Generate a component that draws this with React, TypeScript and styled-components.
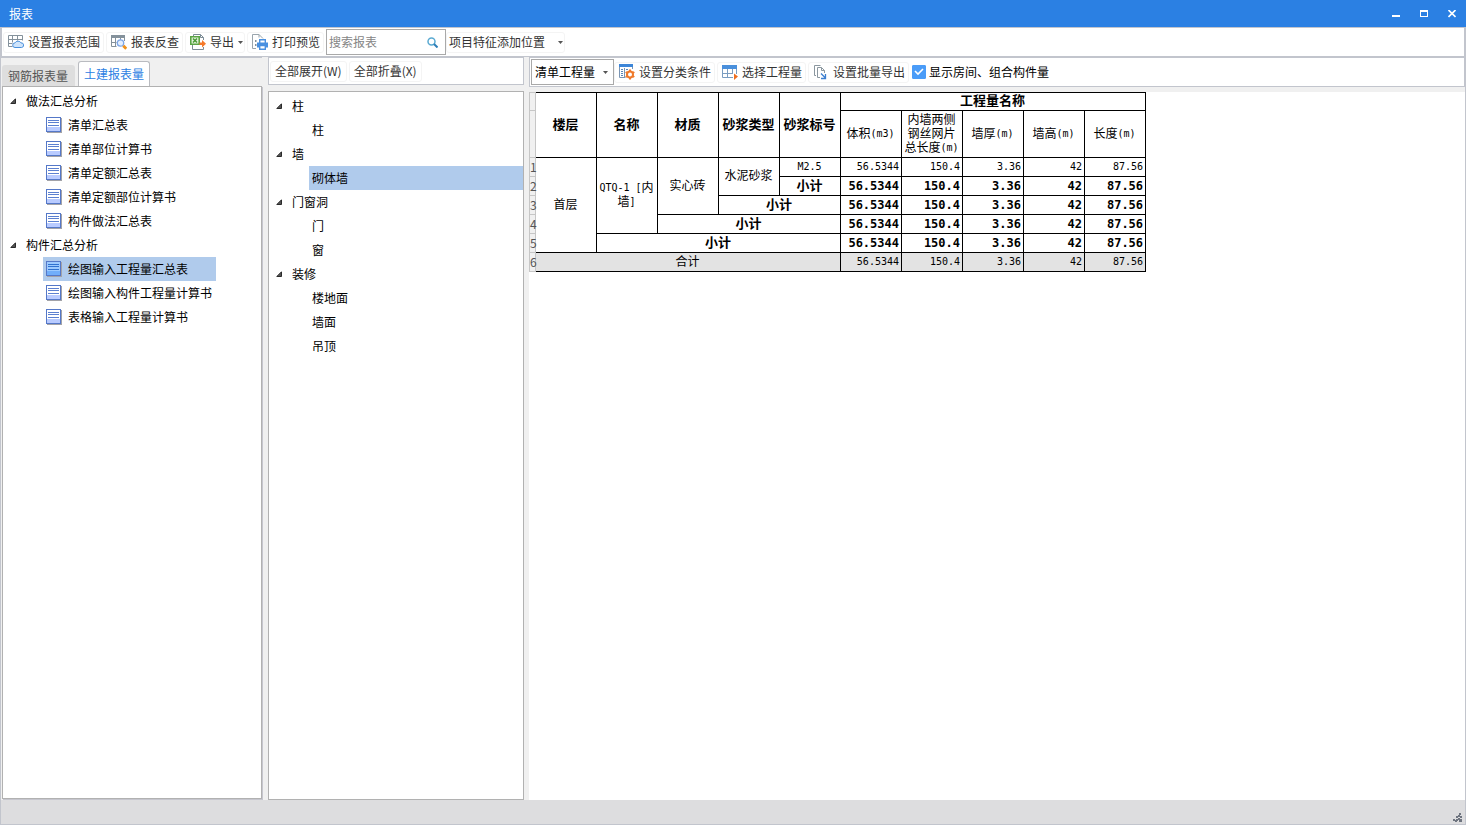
import React, { useState } from "react";
import styled, { createGlobalStyle, css } from "styled-components";

const UI_FONT = `"Noto Sans CJK SC", "Noto Sans", sans-serif`;
const BORDER = "#c2c5cd";
const PANEL_BORDER = "#b1b1b1";
const BLUE = "#2b80e3";
const SELECTED = "#b0cbec";

const GlobalStyle = createGlobalStyle`
  *, *::before, *::after { box-sizing: border-box; }
  body {
    margin: 0;
    background: #f0f0f0;
    color: #000;
    font: 12px/18px ${UI_FONT};
  }
  button, input, select { font: inherit; color: inherit; }
  ul { list-style: none; margin: 0; padding: 0; }
  svg { display: block; flex: none; }
`;

const Window = styled.div`
  display: flex;
  flex-direction: column;
  min-height: 100vh;
`;

const TitleBar = styled.header`
  display: flex;
  align-items: center;
  justify-content: space-between;
  height: 27px;
  padding: 0 5px 0 9px;
  background: ${BLUE};
  color: #fff;
`;

const Title = styled.h1`
  margin: 0;
  font-size: 12px;
  font-weight: 400;
`;

const WindowButtons = styled.div`
  display: flex;
  gap: 10px;
`;

const WindowButton = styled.button`
  display: grid;
  place-items: center;
  width: 18px;
  height: 18px;
  padding: 0;
  border: 0;
  background: none;
`;

const Frame = styled.div`
  flex: 1;
  display: flex;
  flex-direction: column;
  border: 1px solid ${BORDER};
`;

const Toolbar = styled.div`
  display: flex;
  align-items: center;
  background: #fff;
  white-space: nowrap;
`;

const MainToolbar = styled(Toolbar)`
  height: 29px;
  padding-left: 1px;
  border: 1px solid ${BORDER};
  border-width: 0 1px 1px;
`;

const ToolButton = styled.button<{ $menu?: boolean; $plain?: boolean }>`
  display: flex;
  align-items: center;
  gap: 4px;
  height: 21px;
  margin-right: 2px;
  padding: 0 ${(p) => (p.$menu ? 1 : 3)}px 0 4px;
  border: 1px solid #f4f4f4;
  border-radius: 3px;
  background: #fff;
  color: #333;
  ${(p) =>
    p.$plain &&
    css`
      padding-left: 2px;
      gap: 13px;
    `}
`;

const SearchBox = styled.label`
  display: flex;
  align-items: center;
  width: 120px;
  height: 26px;
  padding: 0 7px 0 2px;
  border: 1px solid #a9a9a9;
  background: #fff;
`;

const SearchInput = styled.input`
  flex: 1;
  min-width: 0;
  padding: 0;
  border: 0;
  outline: 0;
  background: none;
  &::placeholder { color: #858585; opacity: 1; }
`;

const Body = styled.main`
  flex: 1;
  display: flex;
`;

const LeftColumn = styled.section`
  display: flex;
  flex-direction: column;
  flex: 0 0 261px;
  padding: 3px 0 1px 1px;
  border-top: 1px solid ${BORDER};
`;

const Tabs = styled.div`
  display: flex;
  align-items: flex-end;
  gap: 3px;
`;

const Tab = styled.button<{ $active: boolean }>`
  height: 21px;
  padding: 0 7px 0 6px;
  border: 0 solid #b9bbc0;
  border-radius: 3px 3px 0 0;
  background: #dedede;
  color: #555;
  line-height: 18px;
  ${(p) =>
    p.$active &&
    css`
      height: 25px;
      padding: 0 5px;
      border-width: 1px 1px 0;
      background: #fff;
      color: ${BLUE};
    `}
`;

const TreePanel = styled.div<{ $raised?: boolean }>`
  flex: 1;
  padding: 2px 0;
  border: 1px solid ${PANEL_BORDER};
  background: #fff;
  ${(p) => p.$raised && css`box-shadow: 1px 1px 0 #c6c6ce;`}
`;

const MiddleColumn = styled.section`
  display: flex;
  flex-direction: column;
  flex: 0 0 256px;
  gap: 6px;
  margin-left: 6px;
`;

const MiddleToolbar = styled(Toolbar)`
  height: 28px;
  padding-left: 1px;
  border: 1px solid ${BORDER};
`;

const TextButton = styled(ToolButton)`
  padding-right: 4px;
`;

const RightColumn = styled.section`
  display: flex;
  flex-direction: column;
  flex: 1;
  min-width: 0;
  margin-left: 5px;
  gap: 5px;
`;

const RightToolbar = styled(Toolbar)`
  height: 30px;
  padding-left: 1px;
  border: 1px solid ${BORDER};
`;

const SelectBox = styled.div`
  display: grid;
  align-items: center;
  width: 83px;
  height: 26px;
  border: 1px solid #a9a9a9;
  & > * { grid-area: 1 / 1; }
  & > svg { justify-self: end; margin-right: 5px; pointer-events: none; }
`;

const Select = styled.select`
  appearance: none;
  width: 100%;
  height: 24px;
  padding: 0 3px;
  border: 0;
  background: none;
`;

const CheckLabel = styled.label`
  display: flex;
  align-items: center;
  gap: 3px;
  margin-left: 1px;
`;

const Check = styled.span`
  display: grid;
  width: 14px;
  height: 14px;
  & > * { grid-area: 1 / 1; pointer-events: none; }
  & > input {
    appearance: none;
    width: 14px;
    height: 14px;
    margin: 0;
    border: 1px solid #4a9cf8;
    border-radius: 1px;
    pointer-events: auto;
  }
  & > input:checked { background: #4a9cf8; }
`;

const Branch = styled.button<{ $indent: number }>`
  display: flex;
  align-items: center;
  gap: 10px;
  width: 100%;
  height: 24px;
  padding: 0 0 0 ${(p) => p.$indent}px;
  border: 0;
  background: none;
`;

const Leaves = styled.ul<{ $indent: number; $fit?: boolean }>`
  margin-left: ${(p) => p.$indent}px;
  ${(p) => p.$fit && css`width: fit-content;`}
`;

const Leaf = styled.button<{ $selected: boolean }>`
  display: flex;
  align-items: center;
  gap: 6px;
  width: 100%;
  height: 24px;
  padding: 0 4px 0 3px;
  border: 0;
  background: ${(p) => (p.$selected ? SELECTED : "transparent")};
  white-space: nowrap;
`;

const Sheet = styled.div`
  flex: 1;
  background: #fff;
`;

const ReportTable = styled.table`
  width: 617px;
  table-layout: fixed;
  border-collapse: separate;
  border-spacing: 0;
  line-height: 14px;
`;

const IndexCol = styled.col`width: 7px;`;
const DataCol = styled.col`width: 61px;`;

const Row = styled.tr<{ $height: number; $total?: boolean }>`
  height: ${(p) => p.$height}px;
  background: ${(p) => (p.$total ? "#e3e3e3" : "#fff")};
`;

const IndexCell = styled.th<{ $first?: boolean }>`
  padding: 0;
  border: 1px solid #c6c6c6;
  border-top-width: ${(p) => (p.$first ? 1 : 0)}px;
  background: #f0f0f0;
  color: #555;
  font-weight: 400;
  text-align: left;
`;

const cell = css<{ $first?: boolean; $bold?: boolean; $number?: boolean }>`
  padding: 0 ${(p) => (p.$number ? 2 : 1)}px 3px 0;
  border: 0 solid #000;
  border-width: ${(p) => (p.$first ? 1 : 0)}px 1px 1px 0;
  font-size: ${(p) => (p.$bold ? 13 : 12)}px;
  font-weight: ${(p) => (p.$bold ? 700 : 400)};
  text-align: ${(p) => (p.$number ? "right" : "center")};
  white-space: pre-line;
`;

const HeadCell = styled.th`${cell}`;
const DataCell = styled.td`${cell}`;

const Latin = styled.span<{ $bold?: boolean }>`
  font-family: "DejaVu Sans Mono", monospace;
  font-size: ${(p) => (p.$bold ? 12 : 10)}px;
  line-height: 10px;
  vertical-align: ${(p) => (p.$bold ? 0 : 1)}px;
`;

const StatusBar = styled.footer`
  display: flex;
  justify-content: flex-end;
  align-items: flex-end;
  height: 24px;
  padding: 0 3px 2px;
  background: #dddddf;
`;

/* ---------- icons ---------- */

const Caret = () => (
  <svg width="5" height="3" viewBox="0 0 5 3" fill="#555"><path d="M0 0h5L2.5 3z" /></svg>
);

const Arrow = () => (
  <svg width="6" height="6" viewBox="0 0 6 6"><path d="M5.500 .8v4.700H.8z" fill="#555" stroke="#2a2a2a" /></svg>
);

const RangeIcon = () => (
  <svg width="16" height="16" viewBox="0 0 16 16" fill="none">
    <path d="M.5 1.500h14v5M.5 1.500v11h4M.5 5.500h14M.5 9.500h4M4.500 1.500v7M9.500 1.500v5" stroke="#84919b" />
    <path d="M7 13.500a2.300 2.300 0 0 1 0-4.600 3.300 3 0 0 1 6 0 2.300 2.300 0 0 1 .6 4.600z" fill="#cfe4fb" stroke="#4a90dc" />
  </svg>
);

const TraceIcon = () => (
  <svg width="16" height="16" viewBox="0 0 16 16" fill="none">
    <path d="M0 1h14v3H0z" fill="#84919b" />
    <path d="M.5 3v9.500h5M.5 8.500h5M4.500 4v8M9.500 4v2M13.500 4v3" stroke="#84919b" />
    <circle cx="9.500" cy="9" r="3.200" fill="#e3efff" stroke="#7ea6e6" strokeWidth="1.300" />
    <path d="M12.300 11.800l3 3" stroke="#f0921c" strokeWidth="3" />
  </svg>
);

const ExportIcon = () => (
  <svg width="16" height="16" viewBox="0 0 16 16" fill="none">
    <path d="M3.500 2V.5h7l3 3V6M2.500 11v4.500h11V13M10.500.5v3h3" stroke="#7d8c96" />
    <path d="M.8 2.800h8.400v7.400H.8z" fill="#e7f4e1" stroke="#5ba545" strokeWidth="1.600" />
    <path d="M3 4.500l4 4M7 4.500l-4 4" stroke="#4b9b36" strokeWidth="1.600" />
    <path d="M9.500 8.500H12V6l4 3.700-4 3.700v-2.400H9.500z" fill="#f5792a" />
  </svg>
);

const PrintIcon = () => (
  <svg width="16" height="16" viewBox="0 0 16 16" fill="none">
    <path d="M4 14.500H.5V.5h6.500l4 4M7 .5v3" stroke="#9aa5ad" />
    <path d="M3 6h1.500v2H3zM3 10h1.500v2H3z" fill="#84919b" />
    <path d="M7.700 9V5.700h5.600V9" stroke="#4a90e0" strokeWidth="1.400" />
    <path d="M5 8.500h11v5h-2.500v-2h-6v2H5z" fill="#4a90e0" />
    <path d="M7.700 11.500h5.600v3.800H7.700z" fill="#fff" stroke="#4a90e0" strokeWidth="1.400" />
  </svg>
);

const SearchIcon = () => (
  <svg width="11" height="11" viewBox="0 0 11 11" fill="none">
    <circle cx="4.500" cy="4.500" r="3.500" stroke="#5aaad2" strokeWidth="1.500" />
    <path d="M7 7l3.500 3.500" stroke="#2f7fb8" strokeWidth="2" />
  </svg>
);

const ClassifyIcon = () => (
  <svg width="16" height="16" viewBox="0 0 16 16" fill="none">
    <path d="M.5 3v10.500h6M5.500 4v9M13.500 3v2" stroke="#7a95b4" />
    <path d="M0 0h14v3H0z" fill="#3d86d8" />
    <path d="M2 5.500h2M2 7.500h2M2 9.500h2M2 11.500h2M7 5.500h2" stroke="#5a86b8" />
    <circle cx="11" cy="10.500" r="3" fill="#fff" stroke="#ef7a2c" strokeWidth="2" />
    <path d="M11 5.500v2M11 13.500v2M6.700 8l1.700 1M13.600 12l1.700 1M6.700 13l1.700-1M13.600 9l1.700-1" stroke="#ef7a2c" strokeWidth="2" />
  </svg>
);

const ChooseIcon = () => (
  <svg width="16" height="16" viewBox="0 0 16 16" fill="none">
    <path d="M0 1h15v4H0z" fill="#4a90dc" />
    <path d="M.5 5v8.500H11M0 9.500h11M5.500 5v8M10.500 5v4M14.500 5v5" stroke="#7a9cc0" />
    <path d="M12 9.500l4 3-4 3.500z" fill="#ef6f20" />
  </svg>
);

const BatchIcon = () => (
  <svg width="16" height="16" viewBox="0 0 16 16" fill="none">
    <path d="M3 11.500H1.500v-10h6M7 13.500H4.500v-10h4l3 3V9M8.500 3.500v3h3" stroke="#8b979f" />
    <path d="M8 9.500l4 4M12.500 10v4.500H8" stroke="#3d7fd0" strokeWidth="1.300" />
  </svg>
);

const ReportIcon = ({ selected }: { selected: boolean }) => (
  <svg width="16" height="16" viewBox="0 0 16 16" fill="none" shapeRendering="crispEdges">
    <path d="M1 15.500h15M15.500 1v15" stroke="#a3a3a8" />
    <path d="M.5.5h14v14H.5z" fill={selected ? "#9ccaff" : "#fff"} stroke="#5578c8" />
    <path d="M1 10h13v4H1z" fill={selected ? "#71aefa" : "#b9cbff"} />
    <path d="M2 3.500h11M2 5.500h11M2 8.500h11" stroke={selected ? "#2f72d0" : "#5c80d0"} />
  </svg>
);

/* ---------- data ---------- */

type Group = { name: string; items: string[] };

const reports: Group[] = [
  { name: "做法汇总分析", items: ["清单汇总表", "清单部位计算书", "清单定额汇总表", "清单定额部位计算书", "构件做法汇总表"] },
  { name: "构件汇总分析", items: ["绘图输入工程量汇总表", "绘图输入构件工程量计算书", "表格输入工程量计算书"] },
];

const elements: Group[] = [
  { name: "柱", items: ["柱"] },
  { name: "墙", items: ["砌体墙"] },
  { name: "门窗洞", items: ["门", "窗"] },
  { name: "装修", items: ["楼地面", "墙面", "吊顶"] },
];

const keyColumns = ["楼层", "名称", "材质", "砂浆类型", "砂浆标号"];
const valueColumns = ["体积(m3)", "内墙两侧\n钢丝网片\n总长度(m)", "墙厚(m)", "墙高(m)", "长度(m)"];
const values = ["56.5344", "150.4", "3.36", "42", "87.56"];

type KeyCell = { text: string; rows?: number; cols?: number; bold?: boolean };

const rows: KeyCell[][] = [
  [
    { text: "首层", rows: 5 },
    { text: "QTQ-1 [内墙]", rows: 4 },
    { text: "实心砖", rows: 3 },
    { text: "水泥砂浆", rows: 2 },
    { text: "M2.5" },
  ],
  [{ text: "小计", bold: true }],
  [{ text: "小计", cols: 2, bold: true }],
  [{ text: "小计", cols: 3, bold: true }],
  [{ text: "小计", cols: 4, bold: true }],
  [{ text: "合计", cols: 5 }],
];

/* Sets the half-width runs of a label in the monospaced face. */
const Mixed = ({ text, bold }: { text: string; bold?: boolean }) => (
  <>
    {text.split(/([\x20-\x7e]+)/).map((part, i) =>
      i % 2 ? <Latin key={i} $bold={bold}>{part}</Latin> : part
    )}
  </>
);

type TreeProps = {
  groups: Group[];
  initial: string;
  branchIndent: number;
  leafIndent: number;
  icons?: boolean;
};

const Tree = ({ groups, initial, branchIndent, leafIndent, icons }: TreeProps) => {
  const [selected, setSelected] = useState(initial);
  const [closed, setClosed] = useState<string[]>([]);
  const toggle = (name: string) =>
    setClosed((c) => (c.includes(name) ? c.filter((n) => n !== name) : [...c, name]));
  return (
    <ul>
      {groups.map((g) => (
        <li key={g.name}>
          <Branch $indent={branchIndent} aria-expanded={!closed.includes(g.name)} onClick={() => toggle(g.name)}>
            <Arrow />
            {g.name}
          </Branch>
          {!closed.includes(g.name) && (
            <Leaves $indent={leafIndent} $fit={icons}>
              {g.items.map((item) => {
                const id = `${g.name}/${item}`;
                return (
                  <li key={id}>
                    <Leaf $selected={selected === id} onClick={() => setSelected(id)}>
                      {icons && <ReportIcon selected={selected === id} />}
                      {item}
                    </Leaf>
                  </li>
                );
              })}
            </Leaves>
          )}
        </li>
      ))}
    </ul>
  );
};

const Report = () => (
  <ReportTable>
    <colgroup>
      <IndexCol />
      {Array.from({ length: 10 }, (_, i) => <DataCol key={i} />)}
    </colgroup>
    <thead>
      <Row $height={19}>
        <IndexCell $first />
        {keyColumns.map((c) => <HeadCell key={c} rowSpan={2} $first $bold>{c}</HeadCell>)}
        <HeadCell colSpan={5} $first $bold>工程量名称</HeadCell>
      </Row>
      <Row $height={47}>
        <IndexCell />
        {valueColumns.map((c) => <HeadCell key={c}><Mixed text={c} /></HeadCell>)}
      </Row>
    </thead>
    <tbody>
      {rows.map((keys, r) => {
        const bold = r > 0 && r < rows.length - 1;
        return (
          <Row key={r} $height={19} $total={r === rows.length - 1}>
            <IndexCell scope="row">{r + 1}</IndexCell>
            {keys.map((k) => (
              <DataCell key={k.text} rowSpan={k.rows} colSpan={k.cols} $bold={k.bold}>
                <Mixed text={k.text} bold={k.bold} />
              </DataCell>
            ))}
            {values.map((v) => (
              <DataCell key={v} $number $bold={bold}><Mixed text={v} bold={bold} /></DataCell>
            ))}
          </Row>
        );
      })}
    </tbody>
  </ReportTable>
);

export default function App() {
  const [tab, setTab] = useState("土建报表量");
  return (
    <Window lang="zh-CN">
      <GlobalStyle />
      <TitleBar>
        <Title>报表</Title>
        <WindowButtons>
          <WindowButton aria-label="最小化">
            <svg width="8" height="8" viewBox="0 0 8 8" fill="#fff"><path d="M0 5h8v2H0z" /></svg>
          </WindowButton>
          <WindowButton aria-label="最大化">
            <svg width="8" height="8" viewBox="0 0 8 8" fill="#fff"><path d="M0 0h8v7H0zM1 2v4h6V2z" fillRule="evenodd" /></svg>
          </WindowButton>
          <WindowButton aria-label="关闭">
            <svg width="8" height="8" viewBox="0 0 8 8" stroke="#fff" strokeWidth="1.600"><path d="M.5 0l7 7M7.500 0l-7 7" /></svg>
          </WindowButton>
        </WindowButtons>
      </TitleBar>
      <Frame>
        <MainToolbar>
          <ToolButton><RangeIcon />设置报表范围</ToolButton>
          <ToolButton><TraceIcon />报表反查</ToolButton>
          <ToolButton $menu><ExportIcon />导出<Caret /></ToolButton>
          <ToolButton><PrintIcon />打印预览</ToolButton>
          <SearchBox>
            <SearchInput type="text" placeholder="搜索报表" aria-label="搜索报表" />
            <SearchIcon />
          </SearchBox>
          <ToolButton $menu $plain>项目特征添加位置<Caret /></ToolButton>
        </MainToolbar>
        <Body>
          <LeftColumn>
            <Tabs role="tablist">
              {["钢筋报表量", "土建报表量"].map((t) => (
                <Tab key={t} role="tab" aria-selected={tab === t} $active={tab === t} onClick={() => setTab(t)}>{t}</Tab>
              ))}
            </Tabs>
            <TreePanel $raised>
              <Tree groups={reports} initial="构件汇总分析/绘图输入工程量汇总表" branchIndent={7} leafIndent={40} icons />
            </TreePanel>
          </LeftColumn>
          <MiddleColumn>
            <MiddleToolbar>
              <TextButton>全部展开(W)</TextButton>
              <TextButton>全部折叠(X)</TextButton>
            </MiddleToolbar>
            <TreePanel>
              <Tree groups={elements} initial="墙/砌体墙" branchIndent={7} leafIndent={40} />
            </TreePanel>
          </MiddleColumn>
          <RightColumn>
            <RightToolbar>
              <SelectBox>
                <Select aria-label="工程量类型" defaultValue="清单工程量">
                  <option>清单工程量</option>
                </Select>
                <Caret />
              </SelectBox>
              <ToolButton><ClassifyIcon />设置分类条件</ToolButton>
              <ToolButton><ChooseIcon />选择工程量</ToolButton>
              <ToolButton><BatchIcon />设置批量导出</ToolButton>
              <CheckLabel>
                <Check>
                  <input type="checkbox" defaultChecked />
                  <svg width="14" height="14" viewBox="0 0 14 14" fill="none"><path d="M3 6l3 3 5-5" stroke="#fff" strokeWidth="1.600" /></svg>
                </Check>
                显示房间、组合构件量
              </CheckLabel>
            </RightToolbar>
            <Sheet><Report /></Sheet>
          </RightColumn>
        </Body>
        <StatusBar>
          <svg width="9" height="9" viewBox="0 0 9 9" fill="#6f7580">
            <path d="M6 0h2v2H6zM3 3h2v2H3zM5 2h2v2H5zM7 3h2v2H7zM0 6h2v2H0zM3 6h2v2H3zM2 7h2v2H2zM6 6h3v3H6zM5 5h2v2H5z" />
          </svg>
        </StatusBar>
      </Frame>
    </Window>
  );
}
